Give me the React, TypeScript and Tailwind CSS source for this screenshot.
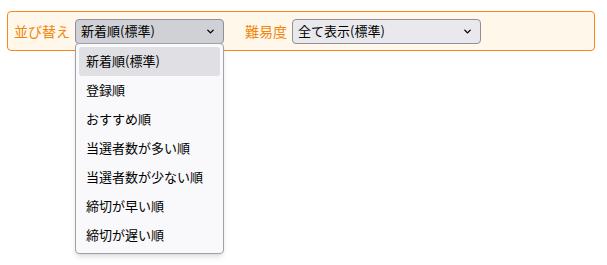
import { ChevronDown } from "lucide-react";

const sortOptions = [
  "新着順(標準)",
  "登録順",
  "おすすめ順",
  "当選者数が多い順",
  "当選者数が少ない順",
  "締切が早い順",
  "締切が遅い順",
];

export default function App() {
  return (
    <div className="w-[607px] h-[265px] bg-white pt-[11px] pl-[7px] font-['Noto_Sans_CJK_JP',sans-serif]">
      <div className="relative flex items-center w-[588px] h-[40px] border border-[#f5891f] rounded-[4px] bg-[#fff7ea] pl-[6px]">
        <span className="text-[14px] text-[#f0860f] mr-[5px]">並び替え</span>
        <div className="relative">
          <div className="flex items-center justify-between w-[149px] h-[25px] border border-[#8f8f9d] rounded-[4px] bg-[#d0d0d7] pl-[5px] pr-[7px] text-[13px] text-black">
            <span>新着順(標準)</span>
            <ChevronDown className="w-[11px] h-[11px]" strokeWidth={3} />
          </div>
          <div className="absolute left-0 top-[24px] w-[149px] border border-[#a0a0a8] rounded-[4px] bg-[#f9f9fb] shadow-md py-[3px] px-[3px] z-10">
            {sortOptions.map((o, i) => (
              <div
                key={o}
                className={`h-[29px] flex items-center pl-[7px] text-[13px] text-black rounded-[3px] ${
                  i === 0 ? "bg-[#dfdfe4]" : ""
                }`}
              >
                {o}
              </div>
            ))}
          </div>
        </div>
        <span className="text-[14px] text-[#f0860f] ml-[21px] mr-[5px]">難易度</span>
        <div className="flex items-center justify-between w-[189px] h-[25px] border border-[#8f8f9d] rounded-[4px] bg-[#e9e9ed] pl-[5px] pr-[7px] text-[13px] text-black">
          <span>全て表示(標準)</span>
          <ChevronDown className="w-[11px] h-[11px]" strokeWidth={3} />
        </div>
      </div>
    </div>
  );
}
